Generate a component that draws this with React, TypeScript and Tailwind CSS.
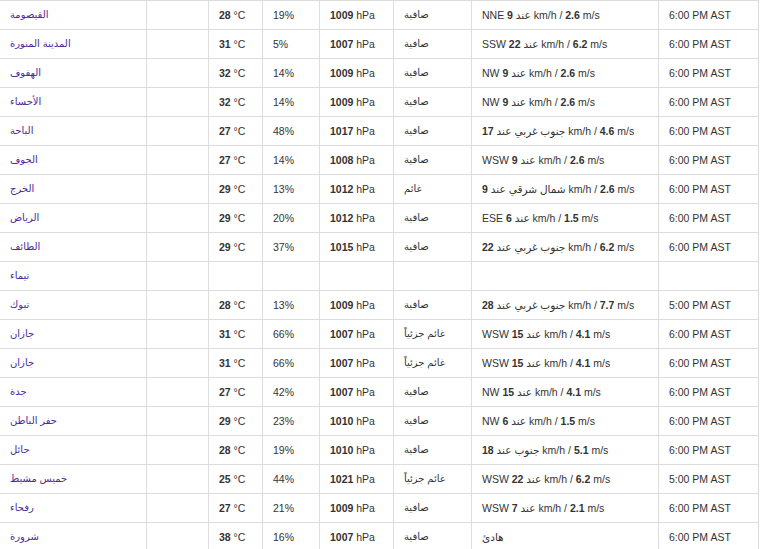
import type { ReactNode } from "react";

type Row = {
  city: string;
  temp?: string;
  hum?: string;
  pres?: string;
  cond?: string;
  wind?: ReactNode;
  time?: string;
};

function Wind({ dir, speed, ms }: { dir: string; speed: string; ms: string }) {
  return (
    <>
      {dir} عند <b>{speed}</b> km/h / <b>{ms}</b> m/s
    </>
  );
}

const rows: Row[] = [
  { city: "القيصومة", temp: "28", hum: "19%", pres: "1009", cond: "صافية", wind: <Wind dir="NNE" speed="9" ms="2.6" />, time: "6:00 PM AST" },
  { city: "المدينة المنورة", temp: "31", hum: "5%", pres: "1007", cond: "صافية", wind: <Wind dir="SSW" speed="22" ms="6.2" />, time: "6:00 PM AST" },
  { city: "الهفوف", temp: "32", hum: "14%", pres: "1009", cond: "صافية", wind: <Wind dir="NW" speed="9" ms="2.6" />, time: "6:00 PM AST" },
  { city: "الأحساء", temp: "32", hum: "14%", pres: "1009", cond: "صافية", wind: <Wind dir="NW" speed="9" ms="2.6" />, time: "6:00 PM AST" },
  { city: "الباحة", temp: "27", hum: "48%", pres: "1017", cond: "صافية", wind: <Wind dir="جنوب غربي" speed="17" ms="4.6" />, time: "6:00 PM AST" },
  { city: "الجوف", temp: "27", hum: "14%", pres: "1008", cond: "صافية", wind: <Wind dir="WSW" speed="9" ms="2.6" />, time: "6:00 PM AST" },
  { city: "الخرج", temp: "29", hum: "13%", pres: "1012", cond: "غائم", wind: <Wind dir="شمال شرقي" speed="9" ms="2.6" />, time: "6:00 PM AST" },
  { city: "الرياض", temp: "29", hum: "20%", pres: "1012", cond: "صافية", wind: <Wind dir="ESE" speed="6" ms="1.5" />, time: "6:00 PM AST" },
  { city: "الطائف", temp: "29", hum: "37%", pres: "1015", cond: "صافية", wind: <Wind dir="جنوب غربي" speed="22" ms="6.2" />, time: "6:00 PM AST" },
  { city: "تيماء" },
  { city: "تبوك", temp: "28", hum: "13%", pres: "1009", cond: "صافية", wind: <Wind dir="جنوب غربي" speed="28" ms="7.7" />, time: "5:00 PM AST" },
  { city: "جازان", temp: "31", hum: "66%", pres: "1007", cond: "غائم جزئياً", wind: <Wind dir="WSW" speed="15" ms="4.1" />, time: "6:00 PM AST" },
  { city: "جازان", temp: "31", hum: "66%", pres: "1007", cond: "غائم جزئياً", wind: <Wind dir="WSW" speed="15" ms="4.1" />, time: "6:00 PM AST" },
  { city: "جدة", temp: "27", hum: "42%", pres: "1007", cond: "صافية", wind: <Wind dir="NW" speed="15" ms="4.1" />, time: "6:00 PM AST" },
  { city: "حفر الباطن", temp: "29", hum: "23%", pres: "1010", cond: "صافية", wind: <Wind dir="NW" speed="6" ms="1.5" />, time: "6:00 PM AST" },
  { city: "حائل", temp: "28", hum: "19%", pres: "1010", cond: "صافية", wind: <Wind dir="جنوب" speed="18" ms="5.1" />, time: "6:00 PM AST" },
  { city: "خميس مشيط", temp: "25", hum: "44%", pres: "1021", cond: "غائم جزئياً", wind: <Wind dir="WSW" speed="22" ms="6.2" />, time: "5:00 PM AST" },
  { city: "رفحاء", temp: "27", hum: "21%", pres: "1009", cond: "صافية", wind: <Wind dir="WSW" speed="7" ms="2.1" />, time: "6:00 PM AST" },
  { city: "شرورة", temp: "38", hum: "16%", pres: "1007", cond: "صافية", wind: "هادئ", time: "6:00 PM AST" },
];

const cell = "flex h-[29px] items-center border-r border-b border-[#dddddd] pl-[10px] pt-[2px] whitespace-nowrap overflow-hidden";

export default function App() {
  return (
    <div
      className="h-[549px] w-[760px] overflow-hidden bg-white text-[10.5px] text-[#333333]"
      style={{ fontFamily: '"Liberation Sans", Arial, "DejaVu Sans", sans-serif' }}
    >
      <div className="grid w-[759px] grid-cols-[147px_62px_54px_57px_74px_78px_187px_100px] border-t border-[#dddddd]">
        {rows.map((r, i) => (
          <div key={i} className="contents">
            <div className={cell}>
              <a className="mb-[4px] text-[10px] text-[#4a2b9a]">{r.city}</a>
            </div>
            <div className={cell} />
            <div className={cell}>
              {r.temp && (
                <span>
                  <b>{r.temp}</b> °C
                </span>
              )}
            </div>
            <div className={cell}>{r.hum}</div>
            <div className={cell}>
              {r.pres && (
                <span>
                  <b>{r.pres}</b> hPa
                </span>
              )}
            </div>
            <div className={cell}>
              <span className="mb-[4px] text-[10px]">{r.cond}</span>
            </div>
            <div className={cell}>
              <span>{r.wind}</span>
            </div>
            <div className={cell}>{r.time}</div>
          </div>
        ))}
      </div>
    </div>
  );
}
